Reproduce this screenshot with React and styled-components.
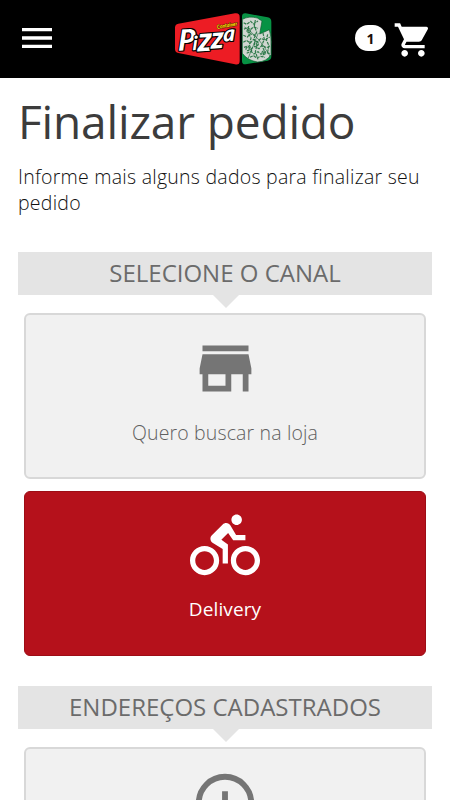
import React, { useState } from "react";
import styled, { createGlobalStyle } from "styled-components";
import { MdMenu, MdShoppingCart, MdStore } from "react-icons/md";

const GlobalStyle = createGlobalStyle`
  * {
    box-sizing: border-box;
  }

  body {
    margin: 0;
    background-color: #fff;
    font-family: "Open Sans", sans-serif;
    height: 800px;
    overflow: hidden;
  }
`;

const PizzaLogo = () => (
  <LogoSvg viewBox="0 0 360 204" role="img" aria-label="Container Pizza">
    <path
      d="M40 56 L210 25 Q224 23 224 36 V168 Q224 181 210 178 L40 144 Q30 142 30 132 V68 Q30 58 40 56Z"
      fill="#ed1c24"
    />
    <path
      d="M242 25 L308 37 Q319 39 319 50 V154 Q319 165 308 167 L242 178 Q231 179 231 168 V35 Q231 24 242 25Z"
      fill="#079244"
    />
    <path
      d="M232 43 Q252 32 277 39 L291 48 L284 87 L313 74 Q320 95 318 121 L318 149 Q305 170 278 171 Q248 167 232 145Z"
      fill="#d0d6d0"
      stroke="#0b5b2e"
      strokeWidth="2"
    />
    <g fill="none" stroke="#2f7a4a" strokeWidth="3.5" strokeDasharray="9 3">
      <path d="M236 53l9 5 12-9 8 8 14-9M237 73l9-6 10 7 9-8 14 4M235 91l12 5 9-10 12 5 7-8" />
      <path d="M235 112l9-6 12 8 10-11 11 8 11-11 12 6 14-10M237 127l12-4 8 9 13-8 12 7 9-10 13 7 12-5" />
      <path d="M245 145l12-6 10 8 12-7 9 8 12-7 14 5M255 157l11-5 9 7 12-5 13 3M251 63l-2 19 9 17-5 21 8 20M271 45l-3 18 7 18-8 20 9 19-5 20 8 23M294 84l4 19-8 18 8 16-5 20M308 88l-4 17 8 17-5 23" />
      <circle cx="251" cy="78" r="5" />
      <circle cx="274" cy="116" r="6" />
      <circle cx="296" cy="143" r="5" />
      <circle cx="248" cy="132" r="5" />
    </g>
    <path d="M238 66 Q279 91 315 153 M280 84 L249 161" fill="none" stroke="#236b41" strokeWidth="2" />
    <LogoName transform="rotate(-4 38 136) translate(9 0) skewX(-6) translate(6 0)">
      <tspan x="38" y="137" fontSize="86">P</tspan>
      <tspan x="82" y="139" fontSize="58">i</tspan>
      <tspan x="97" y="144" fontSize="100">z</tspan>
      <tspan x="137" y="138" fontSize="90">z</tspan>
      <tspan x="174" y="119" fontSize="66">a</tspan>
    </LogoName>
    <LogoTag x="157" y="72" transform="rotate(-10 157 72)" textLength="61" lengthAdjust="spacingAndGlyphs">
      Container
    </LogoTag>
  </LogoSvg>
);

const BikeIcon = () => (
  <svg viewBox="0 0 24 24" width="70" height="70" fill="currentColor">
    <path d="M16 4.8c.99 0 1.8-.81 1.8-1.8s-.81-1.8-1.8-1.8c-1 0-1.8.81-1.8 1.8S15 4.8 16 4.8zm3 7.2c-2.8 0-5 2.2-5 5s2.2 5 5 5 5-2.2 5-5-2.2-5-5-5zm0 8.2c-1.77 0-3.2-1.43-3.2-3.2s1.43-3.2 3.2-3.2 3.2 1.43 3.2 3.2-1.43 3.2-3.2 3.2zM14.8 10H19V8.2h-3.2l-1.93-3.27c-.3-.5-.84-.83-1.46-.83-.47 0-.89.19-1.2.5L7.5 8.29C7.19 8.6 7 9.02 7 9.5c0 .63.33 1.16.85 1.47L11.2 13v5H13v-6.48l-2.25-1.67 2.32-2.33L14.8 10zM5 12c-2.8 0-5 2.2-5 5s2.2 5 5 5 5-2.2 5-5-2.2-5-5-5zm0 8.2c-1.77 0-3.2-1.43-3.2-3.2s1.43-3.2 3.2-3.2 3.2 1.43 3.2 3.2S6.77 20.2 5 20.2z" />
  </svg>
);

const AddIcon = () => (
  <svg viewBox="0 0 24 24" width="70" height="70" fill="none" stroke="currentColor" strokeWidth="2">
    <circle cx="12" cy="12" r="9" />
    <path d="M12 8v8M8 12h8" />
  </svg>
);

const App = () => {
  const [channel, setChannel] = useState("delivery");

  return (
    <Page>
      <GlobalStyle />
      <Header>
        <IconButton aria-label="Menu">
          <MdMenu size={40} />
        </IconButton>
        <PizzaLogo />
        <Cart>
          <CartCount>1</CartCount>
          <MdShoppingCart size={40} />
        </Cart>
      </Header>

      <Content>
        <Title>Finalizar pedido</Title>
        <Intro>Informe mais alguns dados para finalizar seu pedido</Intro>

        <Section>
          <SectionTitle>SELECIONE O CANAL</SectionTitle>
          <Options>
            <Option active={channel === "store"} onClick={() => setChannel("store")}>
              <MdStore size={69} />
              <OptionLabel active={channel === "store"}>Quero buscar na loja</OptionLabel>
            </Option>
            <Option active={channel === "delivery"} onClick={() => setChannel("delivery")}>
              <BikeIcon />
              <OptionLabel active={channel === "delivery"}>Delivery</OptionLabel>
            </Option>
          </Options>
        </Section>

        <Section>
          <SectionTitle>ENDEREÇOS CADASTRADOS</SectionTitle>
          <Options>
            <Option>
              <AddIcon />
            </Option>
          </Options>
        </Section>
      </Content>
    </Page>
  );
};

const Page = styled.div`
  width: 100%;
  height: 800px;
  overflow: hidden;
`;

const Header = styled.header`
  display: grid;
  grid-template-columns: 1fr 120px 1fr;
  align-items: center;
  height: 78px;
  padding: 0 17px;
  color: #fff;
  background-color: #000;
`;

const IconButton = styled.button`
  display: flex;
  justify-self: start;
  margin-top: -2px;
  padding: 0;
  border: none;
  color: inherit;
  background: none;
  cursor: pointer;
`;

const LogoSvg = styled.svg`
  display: block;
  width: 120px;
  height: 68px;
`;

const LogoName = styled.text`
  font-family: "Lato", sans-serif;
  font-weight: 900;
  font-style: italic;
  fill: #fff;
  stroke: #000;
  stroke-width: 7px;
  stroke-linejoin: round;
  paint-order: stroke;
`;

const LogoTag = styled.text`
  font-family: "Lato", sans-serif;
  font-size: 17px;
  font-weight: 900;
  font-style: italic;
  fill: #ffe600;
  stroke: #5d1009;
  stroke-width: 3px;
  paint-order: stroke;
`;

const Cart = styled.div`
  display: flex;
  align-items: center;
  justify-self: end;
  gap: 7px;

  svg {
    margin-top: 2px;
  }
`;

const CartCount = styled.span`
  display: flex;
  align-items: center;
  justify-content: center;
  width: 31px;
  height: 26px;
  margin-bottom: 2px;
  border-radius: 13px;
  color: #1a0d08;
  background-color: #fff;
  font-size: 14px;
  font-weight: 700;
`;

const Content = styled.main`
  padding: 0 18px;
`;

const Title = styled.h1`
  margin: 0;
  padding-top: 11px;
  color: #3c3c3c;
  font-size: 46px;
  font-weight: 400;
  line-height: 64px;
  letter-spacing: -0.15px;
  white-space: nowrap;
`;

const Intro = styled.p`
  margin: 11px 0 36px;
  color: #111;
  font-size: 19.5px;
  font-weight: 340;
  line-height: 26px;
  letter-spacing: 0.25px;
`;

const Section = styled.section`
  margin-bottom: 30px;
`;

const SectionTitle = styled.h2`
  position: relative;
  height: 43px;
  margin: 0;
  color: #6b6b6b;
  background-color: #e4e4e4;
  font-size: 24px;
  font-weight: 400;
  line-height: 42px;
  text-align: center;
  white-space: nowrap;

  &::after {
    content: "";
    position: absolute;
    top: 100%;
    left: 195px;
    border: 13px solid transparent;
    border-top-color: #e4e4e4;
    border-bottom: 0;
  }
`;

const Options = styled.div`
  display: flex;
  flex-direction: column;
  gap: 12px;
  padding: 18px 6px 0;
`;

const Option = styled.button`
  display: flex;
  flex-direction: column;
  align-items: center;
  width: 100%;
  height: 165.5px;
  padding: 19px 0 0;
  border: ${({ active }) => (active ? "1px solid #9d0d15" : "2px solid #d8d8d8")};
  border-radius: 6px;
  color: ${({ active }) => (active ? "#fff" : "#757575")};
  background-color: ${({ active }) => (active ? "#b5111b" : "#f1f1f1")};
  font-family: inherit;
  cursor: pointer;

  svg {
    flex-shrink: 0;
  }
`;

const OptionLabel = styled.span`
  margin-top: ${({ active }) => (active ? "14px" : "15px")};
  color: ${({ active }) => (active ? "#fff" : "#606060")};
  font-size: ${({ active }) => (active ? "19px" : "19.5px")};
  font-weight: ${({ active }) => (active ? 400 : 340)};
  line-height: ${({ active }) => (active ? "28px" : "29px")};
  letter-spacing: ${({ active }) => (active ? "0.1px" : "0.15px")};
`;

export default App;
